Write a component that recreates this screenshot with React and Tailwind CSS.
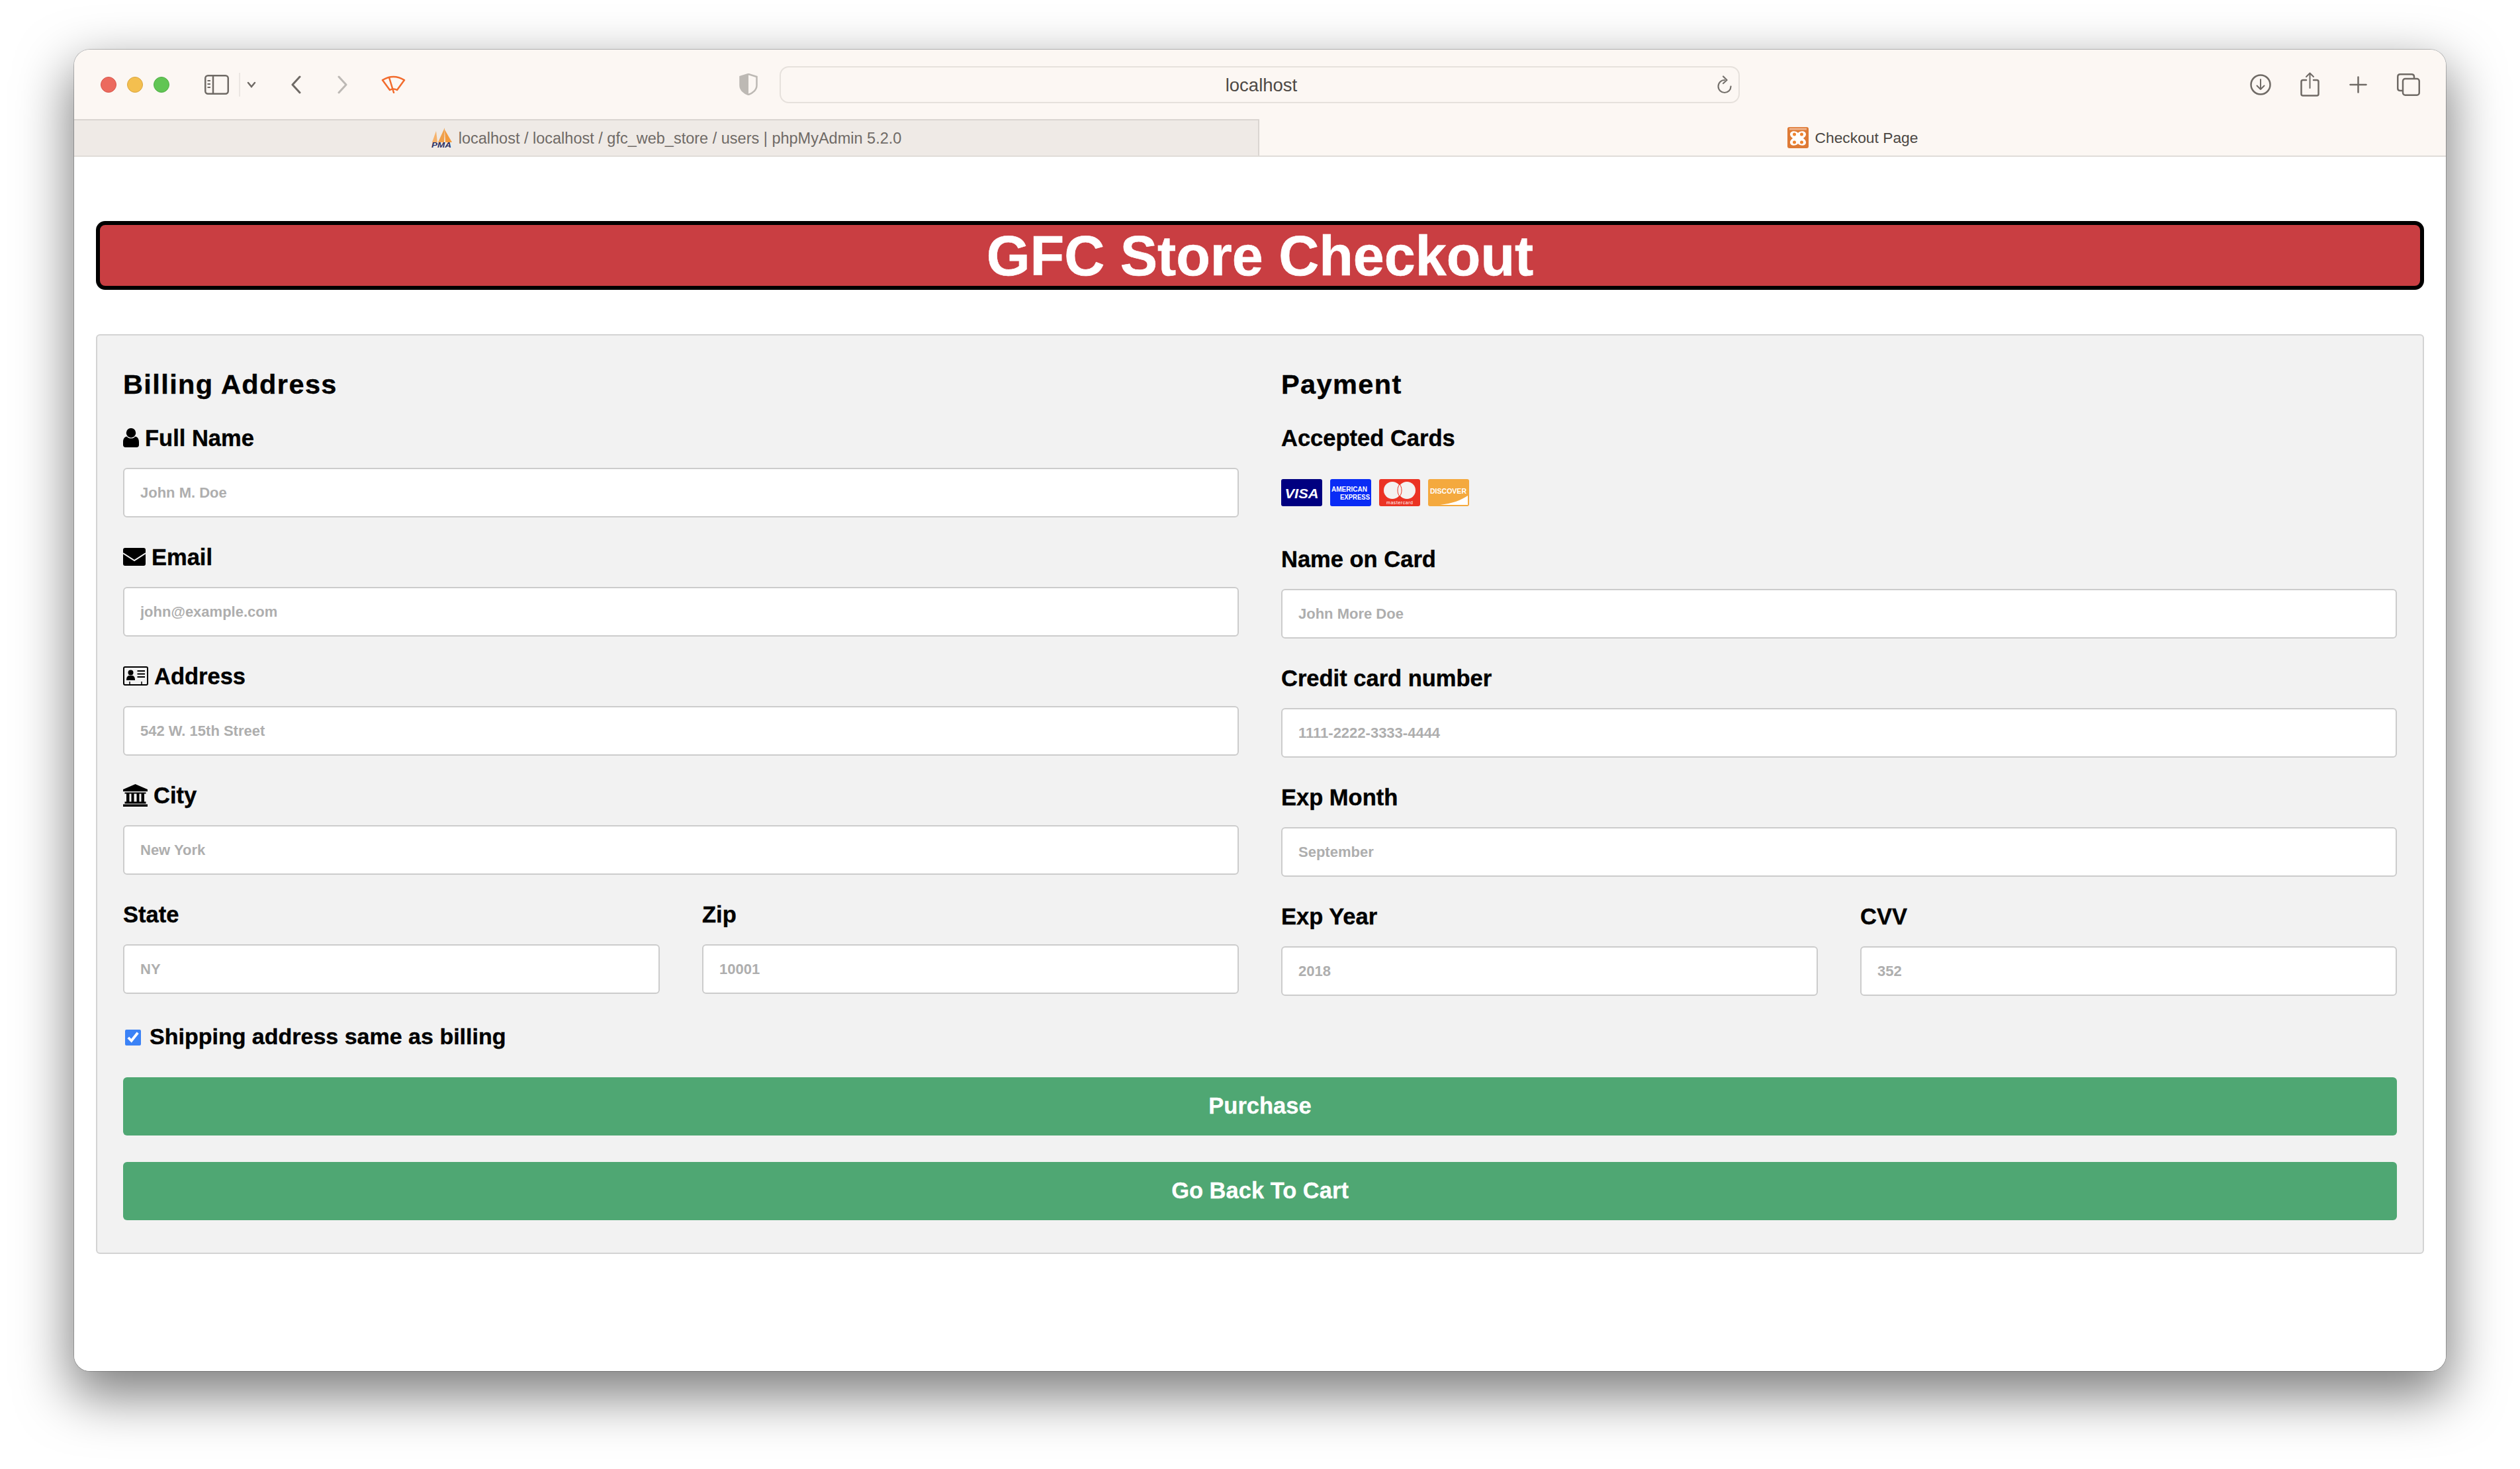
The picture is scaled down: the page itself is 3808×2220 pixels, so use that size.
const Field = ({ label, icon, placeholder }) => (
  <div className="mb-[37px]">
    <label className="mb-[24px] flex h-[44px] items-center gap-[9px] pt-[1px] text-[34.5px] leading-[44px] font-bold text-black [-webkit-text-stroke:0.4px]">
      {icon}
      {label}
    </label>
    <input
      type="text"
      placeholder={placeholder}
      className="block h-[75px] w-full rounded-[6px] border-2 border-[#cccccc] bg-white px-[24px] text-[22px] font-bold placeholder:text-[#aeaeae]"
    />
  </div>
);

const UserIcon = () => (
  <svg width="24" height="29" viewBox="0 0 24 29">
    <circle cx="12" cy="7.2" r="7.2" fill="#000" />
    <path d="M5.5 12.8C7.5 14.8 9.5 15.6 12 15.6C14.5 15.6 16.5 14.8 18.5 12.8C21.8 13.4 24 16 24 21.5V25.5C24 27.5 22.5 29 20.5 29H3.5C1.5 29 0 27.5 0 25.5V21.5C0 16 2.2 13.4 5.5 12.8Z" fill="#000" />
  </svg>
);

const EnvelopeIcon = () => (
  <svg width="34" height="27" viewBox="0 0 34 27">
    <rect width="34" height="27" rx="3" fill="#000" />
    <path d="M0 8L17 19L34 8" fill="none" stroke="#f2f2f2" strokeWidth="2" />
  </svg>
);

const AddressCardIcon = () => (
  <svg width="38" height="29" viewBox="0 0 38 29">
    <rect x="1" y="1" width="36" height="27" rx="2" fill="none" stroke="#000" strokeWidth="2" />
    <circle cx="11.5" cy="9.5" r="4" fill="#000" />
    <path d="M5 21C5 16 7 14 9 14H14C16 14 18 16 18 21Z" fill="#000" />
    <path d="M21.5 7H33M21.5 11.5H33M21.5 16H33" stroke="#000" strokeWidth="2" />
    <path d="M10 23V28M28 23V28" stroke="#000" strokeWidth="1.5" />
  </svg>
);

const BankIcon = () => (
  <svg width="37" height="34" viewBox="0 0 37 34">
    <path d="M18.5 0L37 8V11H0V8Z" fill="#000" />
    <rect x="2.5" y="12.5" width="32" height="2" fill="#000" />
    <path d="M5 14H9.5V27H5ZM12.5 14H16.5V27H12.5ZM20.5 14H24.5V27H20.5ZM27.5 14H32V27H27.5Z" fill="#000" />
    <rect x="2.5" y="26.5" width="32" height="3" fill="#000" />
    <rect x="0" y="30.5" width="37" height="3.5" fill="#000" />
  </svg>
);

const VisaCard = () => (
  <svg width="62" height="41" viewBox="0 0 62 41">
    <rect width="62" height="41" rx="3" fill="#000080" />
    <text x="31" y="29" textAnchor="middle" fontSize="21" fontWeight="700" fontStyle="italic" fill="#fff" textLength="51" lengthAdjust="spacingAndGlyphs">VISA</text>
  </svg>
);

const AmexCard = () => (
  <svg width="62" height="41" viewBox="0 0 62 41">
    <rect width="62" height="41" rx="3" fill="#0a2cf5" />
    <text x="2" y="19" fontSize="10" fontWeight="700" fill="#fff" textLength="54" lengthAdjust="spacingAndGlyphs">AMERICAN</text>
    <text x="15" y="31" fontSize="10" fontWeight="700" fill="#fff" textLength="45" lengthAdjust="spacingAndGlyphs">EXPRESS</text>
  </svg>
);

const MasterCard = () => (
  <svg width="62" height="41" viewBox="0 0 62 41">
    <rect width="62" height="41" rx="3" fill="#eb3323" />
    <circle cx="20" cy="17" r="13" fill="#f4f2f0" />
    <circle cx="42" cy="17" r="13" fill="#f4f2f0" />
    <path d="M31 8C27 12 27 22 31 26C35 22 35 12 31 8Z" fill="#f4f2f0" stroke="#eb3323" strokeWidth="1" />
    <text x="31" y="38" textAnchor="middle" fontSize="7" fill="#fff" textLength="40">mastercard</text>
  </svg>
);

const DiscoverCard = () => (
  <svg width="62" height="41" viewBox="0 0 62 41">
    <rect width="62" height="41" rx="3" fill="#f4a93e" />
    <text x="3" y="22" fontSize="10.5" fontWeight="700" fill="#fff" textLength="55" lengthAdjust="spacingAndGlyphs">DISCOVER</text>
    <path d="M18 39C36 37 50 32 60 25V39Z" fill="#fff" />
  </svg>
);

const PmaIcon = () => (
  <svg width="33" height="32" viewBox="0 0 33 32" className="shrink-0">
    <path d="M2 22L8 5L10 22Z" fill="#f6b26b" />
    <path d="M11 22L21 0L20 22Z" fill="#f0a04b" />
    <path d="M21 3L32 22H22Z" fill="#f39a3c" />
    <text x="1" y="30" fontSize="11" fontWeight="700" fontStyle="italic" fill="#2a2f63" textLength="30" lengthAdjust="spacingAndGlyphs">PMA</text>
  </svg>
);

const XamppIcon = () => (
  <svg width="32" height="32" viewBox="0 0 32 32" className="shrink-0">
    <rect width="32" height="32" rx="3" fill="#de7a35" />
    <rect x="3" y="1.5" width="26" height="3" fill="#efb28a" />
    <path d="M4 11C4 5 13 5 16 9C19 5 28 5 28 11C28 14 25 16 24 17C25 18 28 20 28 23C28 29 19 29 16 25C13 29 4 29 4 23C4 20 7 18 8 17C7 16 4 14 4 11Z" fill="#fff" />
    <circle cx="10.5" cy="11" r="2.5" fill="#ef8430" />
    <circle cx="21.5" cy="11" r="2.5" fill="#ef8430" />
    <circle cx="10.5" cy="23" r="2.5" fill="#ef8430" />
    <circle cx="21.5" cy="23" r="2.5" fill="#ef8430" />
  </svg>
);

function Toolbar() {
  return (
    <div className="flex h-[105px] items-center bg-[#fcf7f3] pl-[40px]">
      <div className="h-[24px] w-[24px] rounded-full border border-[#d8574b] bg-[#ec6a5e]" />
      <div className="ml-[16px] h-[24px] w-[24px] rounded-full border border-[#d9a53e] bg-[#f4bf4f]" />
      <div className="ml-[16px] h-[24px] w-[24px] rounded-full border border-[#50ad45] bg-[#61c554]" />
      <svg className="ml-[53px]" width="37" height="30" viewBox="0 0 37 30" fill="none" stroke="#6f6a65" strokeWidth="2.5">
        <rect x="1.25" y="1.25" width="34.5" height="27.5" rx="4" />
        <path d="M13 1.25V28.75" />
        <path d="M4.5 9H9M4.5 14H9M4.5 19H9" strokeWidth="2" />
      </svg>
      <div className="ml-[15px] h-[36px] w-[2px] bg-[#ece7e3]" />
      <svg className="ml-[10px]" width="14" height="10" viewBox="0 0 14 10" fill="none" stroke="#6f6a65" strokeWidth="2.5" strokeLinecap="round">
        <path d="M2 2L7 8L12 2" />
      </svg>
      <svg className="ml-[52px]" width="16" height="28" viewBox="0 0 16 28" fill="none" stroke="#6f6a65" strokeWidth="3" strokeLinecap="round" strokeLinejoin="round">
        <path d="M14 2L3 14L14 26" />
      </svg>
      <svg className="ml-[55px]" width="16" height="28" viewBox="0 0 16 28" fill="none" stroke="#bdb9b5" strokeWidth="3" strokeLinecap="round" strokeLinejoin="round">
        <path d="M2 2L13 14L2 26" />
      </svg>
      <svg className="ml-[50px]" width="37" height="27" viewBox="0 0 37 27" fill="none" stroke="#f26b2c" strokeWidth="2.5" strokeLinecap="round" strokeLinejoin="round">
        <path d="M2 7Q18.5 -3 35 7L24 22Q18.5 19 13 22Z" />
        <path d="M12 3L19 26" />
      </svg>
      <svg className="ml-[504px]" width="28" height="33" viewBox="0 0 28 33">
        <path d="M14 1L26.5 5V18C26.5 25 20 30 14 32C8 30 1.5 25 1.5 18V5Z" fill="none" stroke="#bdb9b4" strokeWidth="2.5" />
        <path d="M14 1L1.5 5V18C1.5 25 8 30 14 32Z" fill="#bdb9b4" />
      </svg>
      <div className="relative ml-[33px] flex h-[56px] w-[1451px] items-center justify-center rounded-[14px] border-2 border-[#e6e1dc] pt-[2px] pl-[5px] text-[27.5px] text-[#4e4a46]">
        localhost
        <svg className="absolute right-[9px] top-[12px]" width="24" height="28" viewBox="0 0 24 28" fill="none" stroke="#75716c" strokeWidth="2.2" strokeLinecap="round" strokeLinejoin="round">
          <path d="M12 7A9.5 9.5 0 1 0 21.5 16.5" />
          <path d="M10 1.5L15.5 7L10 12" />
        </svg>
      </div>
      <svg className="ml-[771px]" width="32" height="32" viewBox="0 0 32 32" fill="none" stroke="#6f6a65" strokeWidth="2.5" strokeLinecap="round" strokeLinejoin="round">
        <circle cx="16" cy="16" r="14.5" />
        <path d="M16 8V23M10.5 17.5L16 23L21.5 17.5" strokeWidth="2" />
      </svg>
      <svg className="ml-[44px]" width="29" height="37" viewBox="0 0 29 37" fill="none" stroke="#6f6a65" strokeWidth="2.5" strokeLinecap="round" strokeLinejoin="round">
        <path d="M9 12H4C2.5 12 1.5 13 1.5 14.5V33C1.5 34.5 2.5 35.5 4 35.5H25C26.5 35.5 27.5 34.5 27.5 33V14.5C27.5 13 26.5 12 25 12H20" />
        <path d="M14.5 24V2M9 7L14.5 1.5L20 7" strokeWidth="2" />
      </svg>
      <svg className="ml-[45px]" width="27" height="26" viewBox="0 0 27 26" fill="none" stroke="#6f6a65" strokeWidth="2.5" strokeLinecap="round">
        <path d="M13.5 1.5V24.5M1.5 13H25.5" />
      </svg>
      <svg className="ml-[45px]" width="35" height="34" viewBox="0 0 35 34" fill="none" stroke="#6f6a65" strokeWidth="2.5" strokeLinejoin="round">
        <path d="M8 26H5C2.5 26 1.25 24.5 1.25 22.5V5C1.25 2.8 2.8 1.25 5 1.25H22C24.5 1.25 26 2.8 26 5V8" />
        <rect x="9" y="8" width="24.75" height="24.75" rx="3.5" />
      </svg>
    </div>
  );
}

function TabBar() {
  return (
    <div className="flex h-[57px] border-b-2 border-[#e0dcd8] bg-[#fcf7f3]">
      <div className="flex w-[1791px] items-center justify-center gap-[9px] border-t-2 border-r-2 border-[#dad5d1] bg-[#efeae6] text-[23.5px] text-[#6f6a66]">
        <PmaIcon />
        <span className="pt-[2px]">localhost / localhost / gfc_web_store / users | phpMyAdmin 5.2.0</span>
      </div>
      <div className="flex flex-1 items-center justify-center gap-[10px] text-[22.8px] text-[#4a4642]">
        <XamppIcon />
        <span className="pt-[2px]">Checkout Page</span>
      </div>
    </div>
  );
}

export default function App() {
  return (
    <div className="h-[2220px] w-[3808px] overflow-hidden bg-white pt-[75px] pl-[112px] font-['Liberation_Sans',Arial,sans-serif]">
      <div className="flex h-[1997px] w-[3584px] flex-col overflow-hidden rounded-[24px] bg-white shadow-[0_0_0_1px_rgba(0,0,0,0.22),0_32px_80px_6px_rgba(0,0,0,0.5)]">
        <Toolbar />
        <TabBar />
        <div className="flex-1 bg-white px-[33px] pt-[97px]">
          <h1 className="mb-[67px] flex h-[104px] items-center justify-center rounded-[14px] border-[6px] border-black bg-[#c93e42] pt-[2px] text-[84.5px] font-bold text-white [-webkit-text-stroke:0.6px]">
            GFC Store Checkout
          </h1>
          <div className="rounded-[6px] border-2 border-[#d3d3d3] bg-[#f2f2f2] px-[39px] pt-[51px] pb-[49px]">
            <div className="grid grid-cols-2 gap-x-[64px]">
              <div>
                <h3 className="mb-[35px] h-[46px] text-[41.5px] leading-[46px] font-bold tracking-[1.4px] text-black [-webkit-text-stroke:0.4px]">Billing Address</h3>
                <Field label="Full Name" icon={<UserIcon />} placeholder="John M. Doe" />
                <Field label="Email" icon={<EnvelopeIcon />} placeholder="john@example.com" />
                <Field label="Address" icon={<AddressCardIcon />} placeholder="542 W. 15th Street" />
                <Field label="City" icon={<BankIcon />} placeholder="New York" />
                <div className="grid grid-cols-2 gap-x-[64px]">
                  <Field label="State" placeholder="NY" />
                  <Field label="Zip" placeholder="10001" />
                </div>
              </div>
              <div>
                <h3 className="mb-[35px] h-[46px] text-[41.5px] leading-[46px] font-bold tracking-[1.4px] text-black [-webkit-text-stroke:0.4px]">Payment</h3>
                <label className="mb-[24px] block h-[44px] pt-[1px] text-[34.5px] leading-[44px] font-bold text-black [-webkit-text-stroke:0.4px]">Accepted Cards</label>
                <div className="flex h-[115px] gap-[12px] pt-[17px]">
                  <VisaCard />
                  <AmexCard />
                  <MasterCard />
                  <DiscoverCard />
                </div>
                <Field label="Name on Card" placeholder="John More Doe" />
                <Field label="Credit card number" placeholder="1111-2222-3333-4444" />
                <Field label="Exp Month" placeholder="September" />
                <div className="grid grid-cols-2 gap-x-[64px]">
                  <Field label="Exp Year" placeholder="2018" />
                  <Field label="CVV" placeholder="352" />
                </div>
              </div>
            </div>
            <label className="mt-[2px] mb-[40px] flex h-[44px] items-center gap-[13px] pl-[3px] text-[34px] leading-[44px] font-bold text-black [-webkit-text-stroke:0.4px]">
              <input type="checkbox" defaultChecked className="mt-[4px] h-[24px] w-[24px] accent-[#3b82f6]" />
              Shipping address same as billing
            </label>
            <button className="mb-[40px] block h-[88px] w-full rounded-[6px] bg-[#4fa773] text-[34.5px] font-bold text-white [-webkit-text-stroke:0.3px]">Purchase</button>
            <button className="block h-[88px] w-full rounded-[6px] bg-[#4fa773] text-[34.5px] font-bold text-white [-webkit-text-stroke:0.3px]">Go Back To Cart</button>
          </div>
        </div>
      </div>
    </div>
  );
}
